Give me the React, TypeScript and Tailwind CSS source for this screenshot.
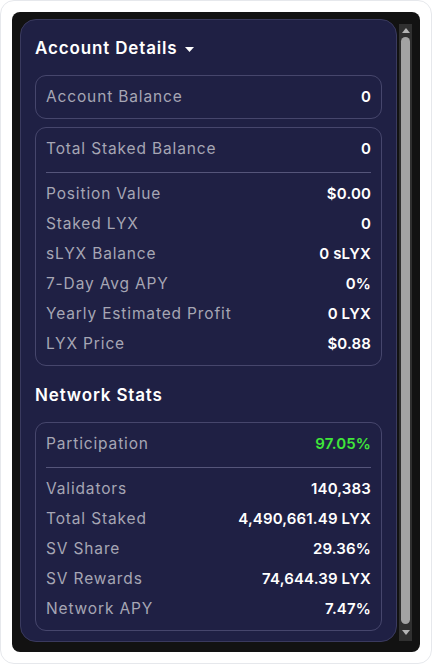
import React from 'react';

type Row = { label: string; value: string; accent?: boolean };

const accountRows: Row[] = [
  { label: 'Position Value', value: '$0.00' },
  { label: 'Staked LYX', value: '0' },
  { label: 'sLYX Balance', value: '0 sLYX' },
  { label: '7-Day Avg APY', value: '0%' },
  { label: 'Yearly Estimated Profit', value: '0 LYX' },
  { label: 'LYX Price', value: '$0.88' },
];

const networkRows: Row[] = [
  { label: 'Validators', value: '140,383' },
  { label: 'Total Staked', value: '4,490,661.49 LYX' },
  { label: 'SV Share', value: '29.36%' },
  { label: 'SV Rewards', value: '74,644.39 LYX' },
  { label: 'Network APY', value: '7.47%' },
];

function StatRow({ label, value, accent }: Row) {
  return (
    <div className="flex h-[22px] items-center justify-between">
      <span className="text-[15.5px] tracking-[0.055em] text-[#a6a6b4]">{label}</span>
      <span className={`text-[15px] font-semibold tracking-[0.01em] ${accent ? 'text-[#3fe63a]' : 'text-white'}`}>
        {value}
      </span>
    </div>
  );
}

function Card({ head, rows }: { head: Row; rows?: Row[] }) {
  return (
    <div className="rounded-[11px] border border-[#46466c] px-[10px] py-[10px]">
      <StatRow {...head} />
      {rows && (
        <>
          <div className="mt-3 mb-[10px] h-px bg-[#55557a]" />
          <div className="flex flex-col gap-2">
            {rows.map((r) => (
              <StatRow key={r.label} {...r} />
            ))}
          </div>
        </>
      )}
    </div>
  );
}

function Scrollbar() {
  return (
    <div className="mt-[5px] mb-[3px] flex w-[13px] flex-col items-center bg-[#303030]">
      <div className="flex h-[13px] items-center justify-center">
        <svg width="8" height="5" viewBox="0 0 8 5">
          <path d="M4 0L8 5H0z" fill="#b4b4b4" />
        </svg>
      </div>
      <div className="w-[9px] flex-1 rounded-full bg-[#a3a3a3]" />
      <div className="flex h-[17px] items-center justify-center">
        <svg width="8" height="5" viewBox="0 0 8 5">
          <path d="M0 0h8L4 5z" fill="#b4b4b4" />
        </svg>
      </div>
    </div>
  );
}

export default function App() {
  return (
    <div
      className="h-[664px] w-[432px] rounded-[14px] border border-[#e6e8ec] bg-white p-[11px]"
      style={{ fontFamily: 'Inter, "Noto Sans", sans-serif' }}
    >
      <div className="flex h-[640px] gap-[2px] rounded-lg bg-[#121212] pt-[7px] pb-2 pl-2 pr-2">
        <div className="h-[623px] flex-1 rounded-2xl border border-[#3a3a5e] bg-[#1f2044] px-[14px] pt-[16px] pb-[10px]">
          <div className="flex h-[26px] items-center gap-[7px]">
            <h2 className="text-[17px] font-semibold tracking-[0.05em] text-white">Account Details</h2>
            <svg width="9" height="5" viewBox="0 0 9 5" className="mt-px">
              <path d="M0 0h9L4.5 5z" fill="#fff" />
            </svg>
          </div>
          <div className="mt-[13px] flex flex-col gap-2">
            <Card head={{ label: 'Account Balance', value: '0' }} />
            <Card head={{ label: 'Total Staked Balance', value: '0' }} rows={accountRows} />
          </div>
          <h2 className="mt-[17px] flex h-[26px] items-center text-[17px] font-semibold tracking-[0.05em] text-white">
            Network Stats
          </h2>
          <div className="mt-[13px]">
            <Card head={{ label: 'Participation', value: '97.05%', accent: true }} rows={networkRows} />
          </div>
        </div>
        <Scrollbar />
      </div>
    </div>
  );
}
